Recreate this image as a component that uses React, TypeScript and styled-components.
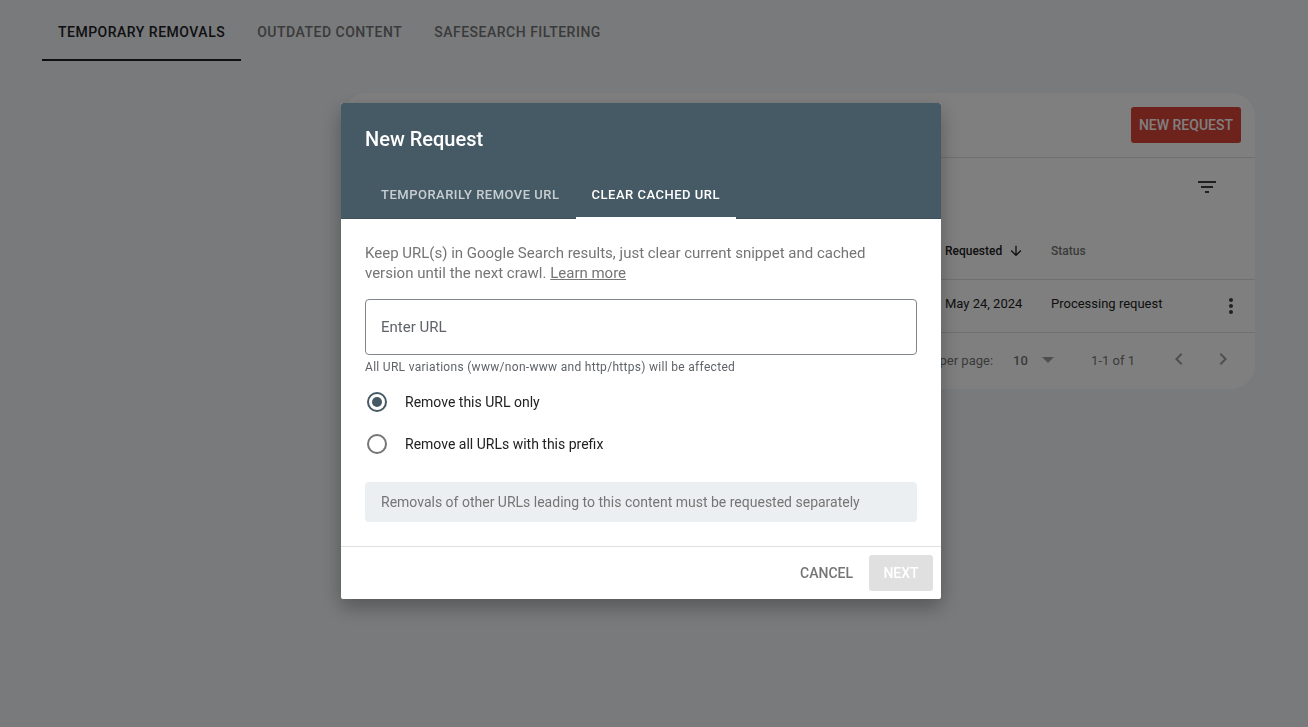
import React from "react";
import styled, { createGlobalStyle } from "styled-components";

const GlobalStyle = createGlobalStyle`
  *, *::before, *::after { box-sizing: border-box; }
  body {
    margin: 0;
    background: #f2f4f8;
    color: #212121;
    font-family: Roboto, "Liberation Sans", sans-serif;
    font-size: 14px;
  }
  button, input, select { font: inherit; letter-spacing: inherit; }
`;

const Page = styled.main`
  min-height: 100vh;
`;

const PageTabs = styled.nav`
  display: flex;
  padding: 0 42px;
`;

const PageTab = styled.button<{ $active?: boolean }>`
  height: 61px;
  padding: 4px 16px 0;
  border: 0;
  border-bottom: 2px solid ${(p) => (p.$active ? "#202124" : "transparent")};
  background: none;
  color: ${(p) => (p.$active ? "#202124" : "#757575")};
  font-weight: 500;
  letter-spacing: 0.5px;
  text-transform: uppercase;
`;

const Card = styled.section`
  margin: 32px 53px 0 343px;
  border-radius: 24px;
  background: #fff;
  overflow: hidden;
`;

const CardHeader = styled.header`
  display: flex;
  justify-content: flex-end;
  padding: 14px;
  border-bottom: 1px solid #e0e0e0;
`;

const NewRequestButton = styled.button`
  height: 36px;
  padding: 0 8px;
  border: 0;
  border-radius: 3px;
  background: #db4437;
  color: #fff;
  font-weight: 500;
  text-transform: uppercase;
`;

const FilterBar = styled.div`
  display: flex;
  justify-content: flex-end;
  padding: 17px 36px 23px;
`;

const IconButton = styled.button<{ $muted?: boolean }>`
  display: inline-flex;
  padding: 0;
  border: 0;
  background: none;
  color: ${(p) => (p.$muted ? "#9e9e9e" : "#3c4043")};
`;

const Table = styled.table`
  width: 100%;
  border-collapse: separate;
  border-spacing: 0;
  table-layout: fixed;
  text-align: left;
`;

const Column = styled.col<{ $width?: number }>`
  width: ${(p) => (p.$width ? `${p.$width}px` : "auto")};
`;

const HeadCell = styled.th<{ $sorted?: boolean }>`
  height: 58px;
  padding: 0;
  border-bottom: 1px solid #e0e0e0;
  color: ${(p) => (p.$sorted ? "#212121" : "#757575")};
  font-size: 12px;
  font-weight: 500;
`;

const SortLabel = styled.span`
  display: flex;
  align-items: center;
  gap: 6px;
`;

const Cell = styled.td`
  height: 53px;
  padding: 0 0 6px;
  border-bottom: 1px solid #e0e0e0;
  font-size: 13px;
`;

const ActionCell = styled(Cell)`
  padding: 2px 12px 0;
`;

const Pagination = styled.footer`
  display: flex;
  align-items: center;
  justify-content: flex-end;
  height: 56px;
  padding: 0 20px 2px 0;
  color: #757575;
  font-size: 13px;
`;

const PageSize = styled.label`
  display: flex;
  align-items: center;
  gap: 20px;
  margin-right: 37px;
`;

const SelectBox = styled.span`
  display: flex;
  align-items: center;
  gap: 14px;

  select {
    padding: 0;
    border: 0;
    appearance: none;
    background: none;
    color: inherit;
    font-weight: 500;
  }

  svg { color: #9e9e9e; }
`;

const Pager = styled.span`
  display: flex;
  gap: 20px;
  margin-left: 32px;
  padding-bottom: 2px;
`;

const Overlay = styled.div`
  position: fixed;
  inset: 0;
  display: flex;
  align-items: center;
  justify-content: center;
  padding: 0 26px 25px 0;
  background: rgba(0, 0, 0, 0.5);
`;

const Dialog = styled.section`
  width: 600px;
  max-width: 100%;
  border-radius: 2px;
  background: #fff;
  overflow: hidden;
  box-shadow: 0 8px 20px rgba(0, 0, 0, 0.3);
`;

const DialogHeader = styled.header`
  padding: 24px 24px 0;
  border-bottom: 1px solid #3f515b;
  background: #455a64;
  color: #fff;
`;

const DialogTitle = styled.h2`
  margin: 0;
  font-size: 20px;
  font-weight: 500;
  line-height: 24px;
`;

const DialogTabs = styled.nav`
  display: flex;
  margin: 20px 0 -1px;
`;

const DialogTab = styled.button<{ $active?: boolean }>`
  height: 48px;
  padding: 0 16px;
  border: 0;
  border-bottom: 2px solid ${(p) => (p.$active ? "#fff" : "transparent")};
  background: none;
  color: ${(p) => (p.$active ? "#fff" : "rgba(255, 255, 255, 0.7)")};
  font-size: 13px;
  font-weight: 500;
  letter-spacing: 0.5px;
  text-transform: uppercase;
`;

const DialogBody = styled.form`
  padding: 24px;
`;

const Description = styled.p`
  margin: 0 0 16px;
  color: #757575;
  font-size: 15px;
  line-height: 20px;

  a { color: inherit; }
`;

const UrlInput = styled.input`
  display: block;
  width: 100%;
  height: 56px;
  padding: 0 15px;
  border: 1px solid #80868b;
  border-radius: 4px;
  background: #fff;
  color: #212121;
  font-size: 15px;

  &::placeholder { color: #5f6368; opacity: 1; }
`;

const HelperText = styled.p`
  margin: 4px 0 0;
  color: #5f6368;
  font-size: 12px;
  line-height: 16px;
  letter-spacing: 0.3px;
`;

const RadioGroup = styled.div`
  margin: 6px 0 17px;
`;

const RadioRow = styled.label`
  display: flex;
  align-items: center;
  gap: 18px;
  height: 42px;
  padding-left: 2px;
`;

const Radio = styled.input`
  width: 20px;
  height: 20px;
  margin: 0;
  border: 2px solid #757575;
  border-radius: 50%;
  appearance: none;

  &:checked {
    border-color: #455a64;
    background: #455a64;
    background-clip: content-box;
    padding: 3px;
  }
`;

const Notice = styled.p`
  margin: 0;
  padding: 10px 16px;
  border-radius: 4px;
  background: #eceff1;
  color: #757575;
  line-height: 20px;
`;

const DialogActions = styled.footer`
  display: flex;
  justify-content: flex-end;
  gap: 8px;
  padding: 8px;
  border-top: 1px solid #e0e0e0;
`;

const ActionButton = styled.button<{ $filled?: boolean }>`
  min-width: 64px;
  height: 36px;
  padding: 0 8px;
  border: 0;
  border-radius: 3px;
  background: ${(p) => (p.$filled ? "#e0e0e0" : "transparent")};
  color: ${(p) => (p.$filled ? "#fff" : "#757575")};
  font-weight: 500;
  text-transform: uppercase;
`;

const Icon = ({ d, size = 24 }: { d: string; size?: number }) => (
  <svg width={size} height={size} viewBox="0 0 24 24" fill="currentColor" aria-hidden="true">
    <path d={d} />
  </svg>
);

const icons = {
  filter: "M10 18h4v-2h-4v2zM3 6v2h18V6H3zm3 7h12v-2H6v2z",
  down: "M20 12l-1.41-1.41L13 16.17V4h-2v12.17l-5.58-5.59L4 12l8 8 8-8z",
  more: "M12 8c1.1 0 2-.9 2-2s-.9-2-2-2-2 .9-2 2 .9 2 2 2zm0 2c-1.1 0-2 .9-2 2s.9 2 2 2 2-.9 2-2-.9-2-2-2zm0 6c-1.1 0-2 .9-2 2s.9 2 2 2 2-.9 2-2-.9-2-2-2z",
  left: "M15.41 7.41L14 6l-6 6 6 6 1.41-1.41L10.83 12z",
  right: "M10 6L8.59 7.41 13.17 12l-4.58 4.59L10 18l6-6z",
};

export default function App() {
  return (
    <>
      <GlobalStyle />
      <Page>
        <PageTabs>
          <PageTab $active>Temporary removals</PageTab>
          <PageTab>Outdated content</PageTab>
          <PageTab>SafeSearch filtering</PageTab>
        </PageTabs>
        <Card>
          <CardHeader>
            <NewRequestButton>New request</NewRequestButton>
          </CardHeader>
          <FilterBar>
            <IconButton aria-label="Filter">
              <Icon d={icons.filter} />
            </IconButton>
          </FilterBar>
          <Table>
            <colgroup>
              <Column />
              <Column $width={106} />
              <Column $width={156} />
              <Column $width={48} />
            </colgroup>
            <thead>
              <tr>
                <HeadCell />
                <HeadCell $sorted>
                  <SortLabel>
                    Requested
                    <Icon d={icons.down} size={16} />
                  </SortLabel>
                </HeadCell>
                <HeadCell>Status</HeadCell>
                <HeadCell />
              </tr>
            </thead>
            <tbody>
              <tr>
                <Cell />
                <Cell>May 24, 2024</Cell>
                <Cell>Processing request</Cell>
                <ActionCell>
                  <IconButton aria-label="More options">
                    <Icon d={icons.more} />
                  </IconButton>
                </ActionCell>
              </tr>
            </tbody>
          </Table>
          <Pagination>
            <PageSize>
              Rows per page:
              <SelectBox>
                <select defaultValue="10">
                  <option>10</option>
                </select>
                <svg width="12" height="6" viewBox="0 0 12 6" fill="currentColor" aria-hidden="true">
                  <path d="M0 0h12L6 6z" />
                </svg>
              </SelectBox>
            </PageSize>
            1-1 of 1
            <Pager>
              <IconButton $muted aria-label="Previous page">
                <Icon d={icons.left} />
              </IconButton>
              <IconButton $muted aria-label="Next page">
                <Icon d={icons.right} />
              </IconButton>
            </Pager>
          </Pagination>
        </Card>
      </Page>
      <Overlay>
        <Dialog role="dialog" aria-modal="true" aria-labelledby="dialog-title">
          <DialogHeader>
            <DialogTitle id="dialog-title">New Request</DialogTitle>
            <DialogTabs>
              <DialogTab>Temporarily remove URL</DialogTab>
              <DialogTab $active>Clear cached URL</DialogTab>
            </DialogTabs>
          </DialogHeader>
          <DialogBody id="request-form" onSubmit={(e) => e.preventDefault()}>
            <Description>
              Keep URL(s) in Google Search results, just clear current snippet and cached version
              until the next crawl. <a href="#learn-more">Learn more</a>
            </Description>
            <UrlInput type="text" placeholder="Enter URL" aria-label="Enter URL" />
            <HelperText>All URL variations (www/non-www and http/https) will be affected</HelperText>
            <RadioGroup role="radiogroup">
              <RadioRow>
                <Radio type="radio" name="scope" defaultChecked />
                Remove this URL only
              </RadioRow>
              <RadioRow>
                <Radio type="radio" name="scope" />
                Remove all URLs with this prefix
              </RadioRow>
            </RadioGroup>
            <Notice>Removals of other URLs leading to this content must be requested separately</Notice>
          </DialogBody>
          <DialogActions>
            <ActionButton type="button">Cancel</ActionButton>
            <ActionButton $filled type="submit" form="request-form" disabled>
              Next
            </ActionButton>
          </DialogActions>
        </Dialog>
      </Overlay>
    </>
  );
}
